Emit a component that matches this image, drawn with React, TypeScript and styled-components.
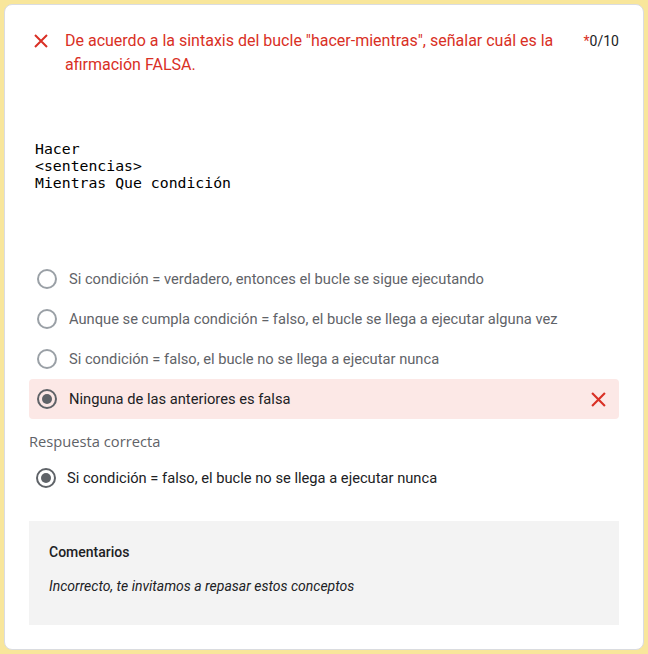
import React from 'react'
import styled, { createGlobalStyle } from 'styled-components'

const Global = createGlobalStyle`
  html, body {
    margin: 0;
    padding: 0;
    background: #f8e69b;
  }
  body {
    font-family: Roboto, 'Liberation Sans', Arial, sans-serif;
  }
`

const Page = styled.div`
  padding: 4px;
  min-height: 654px;
  box-sizing: border-box;
  background: #f8e69b;
`

const Card = styled.div`
  background: #fff;
  border: 1px solid #dadce0;
  border-radius: 8px;
  padding: 24px;
  min-height: 646px;
  box-sizing: border-box;
`

const Header = styled.div`
  display: flex;
  align-items: flex-start;
`

const IconBox = styled.div`
  width: 24px;
  height: 24px;
  flex: none;
  display: flex;
  align-items: center;
  justify-content: center;
`

const Title = styled.div`
  flex: 1;
  margin-left: 12px;
  font-size: 16px;
  line-height: 24px;
  color: #d93025;
  padding-right: 24px;
`

const Score = styled.div`
  font-size: 14px;
  line-height: 24px;
  color: #202124;
  flex: none;
  span {
    color: #d93025;
  }
`

const Code = styled.pre`
  margin: 63px 0 68px 6px;
  font-family: 'DejaVu Sans Mono', 'Liberation Mono', monospace;
  font-size: 14.8px;
  line-height: 17px;
  color: #000;
`

const Options = styled.div`
  display: flex;
  flex-direction: column;
`

const Option = styled.div<{ $wrong?: boolean; $selected?: boolean; $pad?: number }>`
  display: flex;
  align-items: center;
  height: 40px;
  padding-left: ${(p) => p.$pad ?? 8}px;
  padding-right: 9px;
  border-radius: 4px;
  background: ${(p) => (p.$wrong ? '#fce8e6' : 'transparent')};
  font-size: 14.7px;
  color: ${(p) => (p.$selected ? '#202124' : '#5f6368')};
`

const Radio = styled.div<{ $checked?: boolean }>`
  width: 20px;
  height: 20px;
  box-sizing: border-box;
  border-radius: 50%;
  border: 2px solid ${(p) => (p.$checked ? '#5f6368' : '#9aa0a6')};
  flex: none;
  display: flex;
  align-items: center;
  justify-content: center;
  &::after {
    content: '';
    display: ${(p) => (p.$checked ? 'block' : 'none')};
    width: 10px;
    height: 10px;
    border-radius: 50%;
    background: #5f6368;
  }
`

const OptionText = styled.div<{ $gap?: number }>`
  flex: 1;
  margin-left: ${(p) => p.$gap ?? 12}px;
`

const SectionLabel = styled.div`
  margin-top: 12px;
  font-family: 'Open Sans', Roboto, sans-serif;
  font-size: 14.7px;
  font-weight: 500;
  line-height: 20px;
  color: #5f6368;
`

const CorrectBlock = styled.div`
  margin-top: 7px;
`

const Comments = styled.div`
  margin-top: 23px;
  background: #f3f3f3;
  padding: 21px 20px 29px 20px;
`

const CommentsTitle = styled.div`
  font-size: 14px;
  line-height: 20px;
  font-weight: 500;
  color: #202124;
`

const CommentsText = styled.div`
  margin-top: 14px;
  font-size: 14px;
  line-height: 20px;
  font-style: italic;
  color: #202124;
`

const Cross = ({ size = 14 }: { size?: number }) => (
  <svg width={size} height={size} viewBox="0 0 14 14">
    <path d="M1 1 L13 13 M13 1 L1 13" stroke="#d93025" strokeWidth="2" fill="none" />
  </svg>
)

const options = [
  'Si condición = verdadero, entonces el bucle se sigue ejecutando',
  'Aunque se cumpla condición = falso, el bucle se llega a ejecutar alguna vez',
  'Si condición = falso, el bucle no se llega a ejecutar nunca',
]

function App() {
  return (
    <Page>
      <Global />
      <Card>
        <Header>
          <IconBox>
            <Cross />
          </IconBox>
          <Title>
            De acuerdo a la sintaxis del bucle "hacer-mientras", señalar cuál es la afirmación FALSA.
          </Title>
          <Score>
            <span>*</span>0/10
          </Score>
        </Header>

        <Code>{`Hacer
<sentencias>
Mientras Que condición`}</Code>

        <Options>
          {options.map((o) => (
            <Option key={o}>
              <Radio />
              <OptionText>{o}</OptionText>
            </Option>
          ))}
          <Option $wrong $selected>
            <Radio $checked />
            <OptionText>Ninguna de las anteriores es falsa</OptionText>
            <IconBox>
              <Cross size={15} />
            </IconBox>
          </Option>
        </Options>

        <SectionLabel>Respuesta correcta</SectionLabel>
        <CorrectBlock>
          <Option $selected $pad={7}>
            <Radio $checked />
            <OptionText $gap={11}>
              Si condición = falso, el bucle no se llega a ejecutar nunca
            </OptionText>
          </Option>
        </CorrectBlock>

        <Comments>
          <CommentsTitle>Comentarios</CommentsTitle>
          <CommentsText>Incorrecto, te invitamos a repasar estos conceptos</CommentsText>
        </Comments>
      </Card>
    </Page>
  )
}

export default App
